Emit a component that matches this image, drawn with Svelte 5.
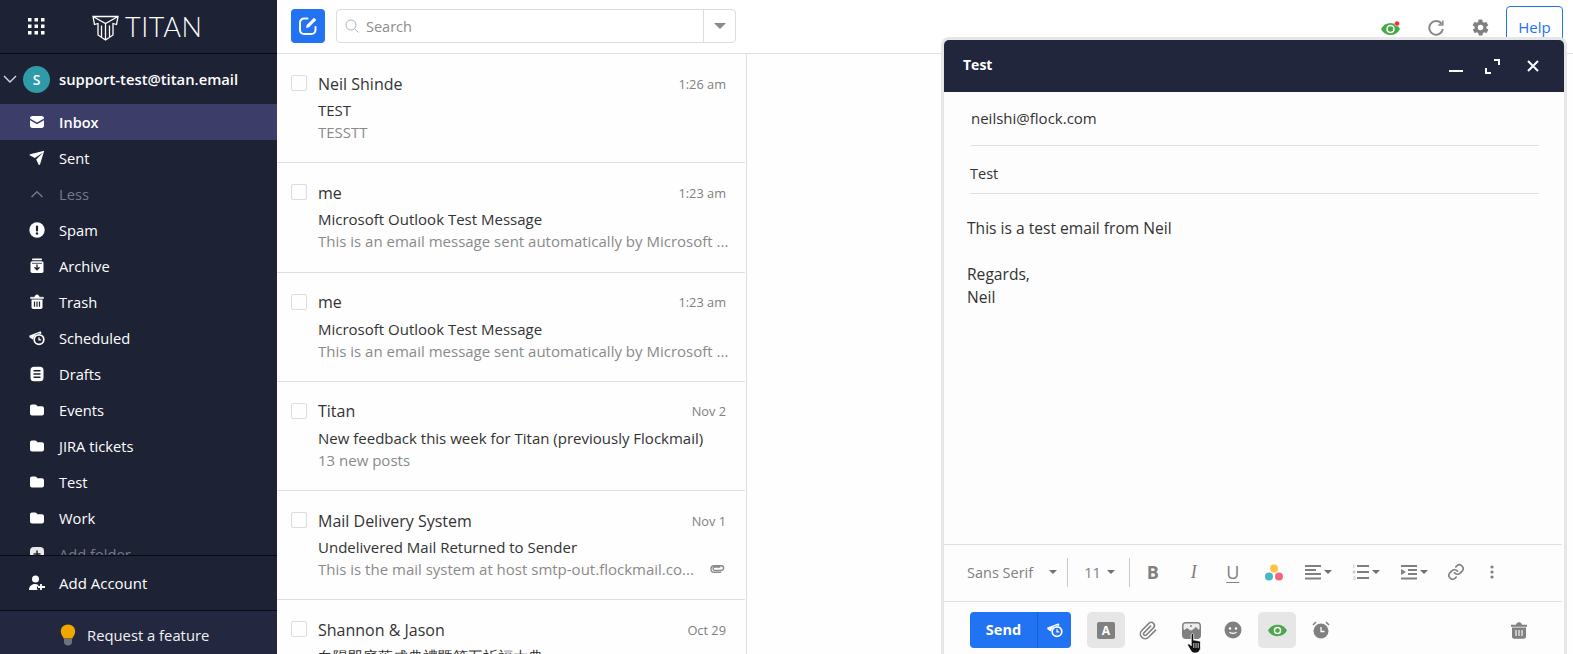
<script>
  const folder = '<path d="M1 4.5C1 3.4 1.9 2.5 3 2.5h3.2c.5 0 .9.2 1.2.5l1.1 1.2H13c1.1 0 2 .9 2 2v5.3c0 1.1-.9 2-2 2H3c-1.1 0-2-.9-2-2z" fill="currentColor"/>';
  const clockBadge = '<path d="M0.5 5.6 11 1.6c.8-.3 1.5.5 1.3 1.3l-.3 1A6 6 0 0 0 4.2 9 6 6 0 0 0 4.3 9.8L1 7.8C.2 7.2 0 6 .5 5.6z" fill="currentColor"/><circle cx="10" cy="9.6" r="4.8" fill="none" stroke="currentColor" stroke-width="1.7"/><path d="M10 7.2v2.6h2.2" fill="none" stroke="currentColor" stroke-width="1.3"/>';
  const icons = {
    inbox: '<path d="M1 4.2C1 3 2 2 3.2 2h9.6C14 2 15 3 15 4.2v.3L8 8.6 1 4.5z" fill="currentColor"/><path d="M1 6.2l7 4.1 7-4.1v5.6c0 1.2-1 2.2-2.2 2.2H3.2C2 14 1 13 1 11.8z" fill="currentColor"/>',
    sent: '<path d="M15.2.8 11 14.6c-.2.6-1 .7-1.3.1L7.2 9.4 14 2.4 5.9 7.9 1 5.6c-.6-.3-.5-1.1.1-1.3z" fill="currentColor"/>',
    less: '<path d="M2.5 11 8 5.8l5.500 5.200" fill="none" stroke="currentColor" stroke-width="1.500"/>',
    spam: '<circle cx="8" cy="8" r="7.700" fill="currentColor"/><rect x="6.900" y="3.500" width="2.200" height="6" rx="1" fill="#1e2235"/><circle cx="8" cy="11.500" r="1.200" fill="#1e2235"/>',
    archive: '<rect x="3" y="0.500" width="10" height="1.800" rx=".8" fill="currentColor"/><path d="M1.500 5c0-1 .8-1.700 1.700-1.700h9.600c.9 0 1.700.7 1.700 1.700v8.300c0 1-.8 1.700-1.700 1.700H3.200c-.9 0-1.700-.7-1.700-1.700z" fill="currentColor"/><path d="M8 6.500v5.200M5.500 9.300 8 11.800l2.500-2.500" stroke="#1e2235" stroke-width="1.400" fill="none"/><path d="M3 5.300h10" stroke="#1e2235" stroke-width=".8"/>',
    trash: '<path d="M1.500 3.200h13v1.300h-13zM5.800 3.200c0-1.400.9-2.400 2.200-2.400s2.200 1 2.200 2.400" fill="currentColor" stroke="currentColor" stroke-width=".5"/><path d="M2.500 5.500h11v7.800c0 1-.8 1.700-1.700 1.700H4.200c-.9 0-1.700-.7-1.700-1.700z" fill="currentColor"/><path d="M5.500 7.500v5.200M8 7.500v5.200M10.500 7.500v5.200" stroke="#1e2235" stroke-width="1.200"/>',
    scheduled: clockBadge,
    drafts: '<rect x="1.500" y="0.800" width="13" height="14.400" rx="3.500" fill="currentColor"/><path d="M4.500 4.800h7M4.500 8h7M4.500 11.200h7" stroke="#1e2235" stroke-width="1.400"/>',
    folder,
    addf: '<rect x="1" y="1" width="14" height="14" rx="4" fill="#e8e8e8"/><path d="M8 4.500v7M4.500 8h7" stroke="#1e2235" stroke-width="1.500"/>'
  };
  const nav = [
    ['Inbox', 'inbox', 'active'], ['Sent', 'sent', ''], ['Less', 'less', 'dim'], ['Spam', 'spam', ''],
    ['Archive', 'archive', ''], ['Trash', 'trash', ''], ['Scheduled', 'scheduled', ''], ['Drafts', 'drafts', ''],
    ['Events', 'folder', ''], ['JIRA tickets', 'folder', ''], ['Test', 'folder', ''], ['Work', 'folder', ''],
    ['Add folder', 'addf', 'dim']
  ];
  const mails = [
    { from: 'Neil Shinde', time: '1:26 am', subject: 'TEST', preview: 'TESSTT' },
    { from: 'me', time: '1:23 am', subject: 'Microsoft Outlook Test Message', preview: 'This is an email message sent automatically by Microsoft ...' },
    { from: 'me', time: '1:23 am', subject: 'Microsoft Outlook Test Message', preview: 'This is an email message sent automatically by Microsoft ...' },
    { from: 'Titan', time: 'Nov 2', subject: 'New feedback this week for Titan (previously Flockmail)', preview: '13 new posts' },
    { from: 'Mail Delivery System', time: 'Nov 1', subject: 'Undelivered Mail Returned to Sender', preview: 'This is the mail system at host smtp-out.flockmail.co...', clip: true },
    { from: 'Shannon & Jason', time: 'Oct 29', subject: '白陽即庭落成典禮暨第五祈福大典', preview: '' }
  ];
</script>

<div class="app">
  <aside class="side">
    <div class="brand">
      <svg class="grid" viewBox="0 0 17 17" width="17" height="17" fill="#fff">
        {#each [0, 6.500, 13] as y}{#each [0, 6.500, 13] as x}<rect {x} {y} width="3.500" height="3.500" />{/each}{/each}
      </svg>
      <svg class="logo" viewBox="0 0 27 26" width="27" height="26" fill="none" stroke="#fff" stroke-width="1.300">
        <path d="M1 1.500h25l-1.500 8-3.500-1v11.500L13.500 25 6 20V8.500l-3.500 1zM1 1.500l12.500 7 12.500-7M13.500 8.500V25M9.500 10.500V22.500M17.500 10.500V22.500" />
      </svg>
      <span class="wordmark">TITAN</span>
    </div>
    <div class="account">
      <svg viewBox="0 0 14 14" width="14" height="14" fill="none" stroke="#d8dae2" stroke-width="1.400"><path d="M1 4l6 6 6-6" /></svg>
      <span class="avatar">S</span>
      <span class="email">support-test@titan.email</span>
    </div>
    <nav class="nav">
      {#each nav as [label, icon, cls]}
        <div class="item {cls}">
          <svg viewBox="0 0 16 16" width="16" height="16">{@html icons[icon]}</svg>
          <span>{label}</span>
        </div>
      {/each}
    </nav>
    <div class="add">
      <svg viewBox="0 0 16 16" width="16" height="16" fill="currentColor">
        <circle cx="6.500" cy="4" r="3.500" /><path d="M0 15c0-3.500 2.500-6 6-6 1.300 0 2.500.3 3.400 1v1.400H8v3.200h1.200V15z" /><path d="M12 9v6M9 12h7" stroke="currentColor" stroke-width="1.800" />
      </svg>
      <span>Add Account</span>
    </div>
    <div class="request">
      <svg viewBox="0 0 16 22" width="16" height="22">
        <path d="M8 .5C3.800.5.800 3.600.800 7.500c0 3 2 4.700 3 7.100h8.400c1-2.400 3-4.100 3-7.100C15.200 3.600 12.200.5 8 .5z" fill="#f0a800" />
        <path d="M4 15h8v3c0 1.200-1 3.500-4 3.500S4 19.200 4 18z" fill="#6f7280" />
      </svg>
      <span>Request a feature</span>
    </div>
  </aside>

  <main class="main">
    <header class="top">
      <button class="compose" aria-label="Compose">
        <svg viewBox="0 0 20 20" width="20" height="20" fill="none" stroke="#fff" stroke-width="2">
          <path d="M9.500 2.500H6A4 4 0 0 0 2 6.500V14a4 4 0 0 0 4 4h7.500a4 4 0 0 0 4-4v-3" stroke-linecap="round" />
          <path d="M8 12l.7-3L16 1.800l2.300 2.300L11 11.300z" fill="#fff" stroke="none" />
        </svg>
      </button>
      <div class="search">
        <svg viewBox="0 0 14 14" width="14" height="14" fill="none" stroke="#b4b4b4" stroke-width="1"><circle cx="6" cy="6" r="5" /><path d="M9.500 9.500l4 4" /></svg>
        <span class="ph">Search</span>
        <span class="drop"><i class="caret big"></i></span>
      </div>
      <div class="tools">
        <svg class="t-eye" viewBox="0 0 20 16" width="20" height="16">
          <path d="M0 9c2-4 5.500-6 9.500-6S17 5 19 9c-2 4-5.500 6-9.500 6S2 13 0 9z" fill="#4aa84a" />
          <circle cx="9.500" cy="9" r="3.500" fill="none" stroke="#fff" stroke-width="1.500" />
          <circle cx="16" cy="3.500" r="2.500" fill="#f02d2d" stroke="#fff" stroke-width=".5" />
        </svg>
        <svg class="t-ref" viewBox="0 0 16 16" width="16" height="16" fill="none" stroke="#888" stroke-width="2">
          <path d="M13.500 3.800A6.800 6.800 0 1 0 14.800 9" /><path d="M14.800 .5v4.500h-4.500" stroke-width="1.500" />
        </svg>
        <svg class="t-gear" viewBox="0 0 24 24" width="19" height="19" fill="#808080">
          <path fill-rule="evenodd" d="M19.400 13a7.600 7.600 0 0 0 0-2l2.100-1.600a.5.500 0 0 0 .1-.6l-2-3.500a.5.500 0 0 0-.6-.2l-2.500 1a7.300 7.300 0 0 0-1.700-1l-.4-2.700a.5.500 0 0 0-.5-.4h-4a.5.500 0 0 0-.5.400l-.4 2.700a7.300 7.300 0 0 0-1.700 1l-2.500-1a.5.500 0 0 0-.6.200l-2 3.500a.5.500 0 0 0 .1.600L4.600 11a7.600 7.600 0 0 0 0 2l-2.100 1.600a.5.500 0 0 0-.1.600l2 3.500c.1.200.4.300.6.200l2.500-1c.5.400 1.100.7 1.700 1l.4 2.700c0 .2.200.4.500.4h4c.2 0 .4-.2.500-.4l.4-2.700c.6-.3 1.200-.6 1.700-1l2.500 1c.2.100.5 0 .6-.2l2-3.500a.5.500 0 0 0-.1-.6zM12 15.500a3.500 3.500 0 1 1 0-7 3.500 3.500 0 0 1 0 7z" />
        </svg>
        <button class="help">Help</button>
      </div>
    </header>
    <div class="panes">
      <section class="list">
        {#each mails as m}
          <article class="mail">
            <span class="check"></span>
            <div class="mbody">
              <div class="l1"><span class="from">{m.from}</span><span class="time">{m.time}</span></div>
              <div class="subject">{m.subject}</div>
              <div class="l3">
                <span class="preview">{m.preview}</span>
                {#if m.clip}
                  <svg class="mclip" viewBox="0 0 16 10" width="15" height="10" fill="none" stroke="#8a8a8a" stroke-width="1.500"><path d="M11 3H5a1.300 1.300 0 0 0 0 3.500h7a2 2 0 0 0 0-5H4.500a3.500 3.500 0 0 0 0 7H12" /></svg>
                {/if}
              </div>
            </div>
          </article>
        {/each}
      </section>
      <div class="empty"></div>
    </div>
  </main>

  <section class="win">
    <header class="win-head">
      <strong>Test</strong>
      <div class="win-ctl">
        <svg viewBox="0 0 14 14" width="14" height="14" stroke="#fff" stroke-width="2" fill="none"><path d="M0 12h14" /></svg>
        <svg viewBox="0 0 15 15" width="15" height="15" stroke="#fff" stroke-width="2" fill="none"><path d="M9 1h5v5M1 9v5h5" /></svg>
        <svg viewBox="0 0 12 12" width="12" height="12" stroke="#fff" stroke-width="2" fill="none"><path d="M1 1l10 10M11 1 1 11" /></svg>
      </div>
    </header>
    <div class="field to">neilshi@flock.com</div>
    <div class="field subj">Test</div>
    <div class="text">
      <div>This is a test email from Neil</div>
      <div>&nbsp;</div>
      <div>Regards,</div>
      <div>Neil</div>
    </div>
    <div class="toolbar">
      <span class="tb fontname">Sans Serif</span><i class="caret c1"></i><span class="vsep s1"></span>
      <span class="tb size">11</span><i class="caret c2"></i><span class="vsep s2"></span>
      <span class="fmt b">B</span>
      <span class="fmt i">I</span>
      <span class="fmt u">U</span>
      <svg class="colors" viewBox="0 0 18 17" width="18" height="17">
        <circle cx="9" cy="4.500" r="4" fill="#fcc53e" /><circle cx="4" cy="12.500" r="4" fill="#46b6c9" /><circle cx="14" cy="12.500" r="4" fill="#f4667a" />
      </svg>
      <svg class="g-align" viewBox="0 0 16 16" width="16" height="16" stroke="#808080" stroke-width="2"><path d="M0 2h16M0 6h11M0 10h16M0 14.500h16" /></svg><i class="caret c3"></i>
      <svg class="g-list" viewBox="0 0 17 16" width="17" height="16">
        <path d="M5 2h12M5 8h12M5 14h12" stroke="#808080" stroke-width="2" /><path d="M1 1h1v3M1 7h2v1H1v1h2M1 13h2v3H1" stroke="#aaa" stroke-width=".6" fill="none" />
      </svg><i class="caret c4"></i>
      <svg class="g-indent" viewBox="0 0 16 16" width="16" height="16">
        <path d="M0 2h16M7 6h9M7 10h9M0 14.500h16" stroke="#808080" stroke-width="2" /><path d="M0 5l5 3-5 3z" fill="#808080" />
      </svg><i class="caret c5"></i>
      <svg class="g-link" viewBox="0 0 24 24" width="18" height="18" fill="none" stroke="#808080" stroke-width="2.200" stroke-linecap="round">
        <path d="M10 13a5 5 0 0 0 7.500.5l3-3a5 5 0 0 0-7-7l-1.700 1.700" /><path d="M14 11a5 5 0 0 0-7.500-.5l-3 3a5 5 0 0 0 7 7l1.700-1.700" />
      </svg>
      <svg class="g-more" viewBox="0 0 4 14" width="4" height="14" fill="#808080"><circle cx="2" cy="2" r="1.600" /><circle cx="2" cy="7" r="1.600" /><circle cx="2" cy="12" r="1.600" /></svg>
    </div>
    <footer class="actions">
      <div class="send">
        <span class="send-l">Send</span>
        <span class="send-r">
          <svg viewBox="0 0 16 16" width="16" height="16" color="#fff">{@html clockBadge}</svg>
        </span>
      </div>
      <span class="sq a-sq"><span class="a-box">A</span></span>
      <svg class="a-clip" viewBox="0 0 24 24" width="19" height="19" fill="none" stroke="#808080" stroke-width="2" stroke-linecap="round">
        <path d="M21 11.500l-9 9a6 6 0 0 1-8.500-8.500l9-9a4 4 0 0 1 5.700 5.700l-9 9a2 2 0 0 1-2.900-2.900l8.300-8.300" />
      </svg>
      <svg class="a-img" viewBox="0 0 19 17" width="19" height="17">
        <rect x="0" y="0" width="19" height="17" rx="4" fill="#808080" />
        <rect x="1.500" y="1.500" width="16" height="7" rx="2" fill="#ececec" />
        <path d="M1 9l4-3 4 3 5-4 4 4v3H1z" fill="#808080" />
        <circle cx="9" cy="4" r="1" fill="#808080" />
      </svg>
      <svg class="a-smile" viewBox="0 0 18 18" width="18" height="18">
        <circle cx="9" cy="9" r="8.500" fill="#808080" /><circle cx="6" cy="7.500" r="1.200" fill="#fff" /><circle cx="12" cy="7.500" r="1.200" fill="#fff" />
        <path d="M5.500 11c1 1.800 6 1.800 7 0" stroke="#fff" stroke-width="1.200" fill="none" />
      </svg>
      <span class="sq e-sq">
        <svg viewBox="0 0 20 13" width="19" height="13">
          <path d="M0 6.500C2 2.500 5.800.5 10 .5s8 2 10 6c-2 4-5.800 6-10 6s-8-2-10-6z" fill="#4aa84a" />
          <circle cx="10" cy="6.500" r="3.200" fill="none" stroke="#fff" stroke-width="1.500" />
        </svg>
      </span>
      <svg class="a-alarm" viewBox="0 0 18 18" width="18" height="18">
        <circle cx="9" cy="10" r="7.500" fill="#808080" />
        <path d="M9 6v4.500h3.500" stroke="#fff" stroke-width="1.300" fill="none" />
        <path d="M1 4l3-3M17 4l-3-3" stroke="#808080" stroke-width="1.500" />
      </svg>
      <svg class="a-trash" viewBox="0 0 16 17" width="16" height="17">
        <path d="M0 3h16v1.500H0zM5.300 3c0-1.500 1.200-2.500 2.700-2.500S10.700 1.500 10.700 3" fill="#808080" stroke="#808080" stroke-width=".5" />
        <path d="M1 5.500h14v9c0 1.300-1 2.300-2.300 2.300H3.300C2 16.800 1 15.800 1 14.500z" fill="#808080" />
        <path d="M5 8v6M8 8v6M11 8v6" stroke="#f5f5f5" stroke-width="1.200" />
      </svg>
      <svg class="hand" viewBox="0 0 16 21" width="16" height="21">
        <path d="M4.200 1.800c0-1.700 2.500-1.700 2.500 0v5.500c.9-.5 1.800-.3 2.100.3.800-.4 1.700-.2 2 .4.800-.3 2.700 0 2.700 1.500v5.200c0 2.600-1.800 5.300-4.700 5.300H7.600c-2 0-3-1-4-2.700L.9 12.800c-.9-1.600 1.100-2.800 2.100-1.500l1.200 1.500z" fill="#111" stroke="#fff" stroke-width=".8" />
        <path d="M6.800 10v5M9 10v5M11.200 10v5" stroke="#fff" stroke-width=".8" />
      </svg>
    </footer>
  </section>
</div>

<style>
  :global(body) { margin: 0; background: #fff; }
  .app {
    display: flex; position: relative; width: 1573px; height: 654px; overflow: hidden;
    font-family: "Open Sans", sans-serif; font-size: 14px; color: #333;
  }
  .side { width: 277px; flex: none; background: #1e2235; color: #fff; display: flex; flex-direction: column; height: 654px; }
  .brand { height: 53px; flex: none; border-bottom: 1px solid #0a0a10; display: flex; align-items: center; box-sizing: content-box; }
  .grid { margin-left: 28px; }
  .logo { margin-left: 47px; margin-top: 2px; }
  .wordmark { margin-left: 6px; font-family: Lato, sans-serif; font-weight: 300; font-size: 27px; letter-spacing: .6px; color: #fff; line-height: 1; }
  .account { height: 50px; flex: none; display: flex; align-items: center; padding-left: 3px; }
  .avatar { width: 27px; height: 27px; border-radius: 50%; background: #2f9aa8; margin-left: 6px; display: flex; align-items: center; justify-content: center; font-weight: 600; font-size: 14px; color: #fff; }
  .email { margin-left: 9px; font-weight: 600; font-size: 14.800px; color: #fff; white-space: nowrap; }
  .nav { height: 451px; flex: none; overflow: hidden; }
  .item { height: 36px; display: flex; align-items: center; padding-left: 29px; gap: 14px; color: #fff; font-size: 14.700px; }
  .item.active { background: #3c3d69; font-weight: 600; font-size: 14.500px; }
  .item.dim { color: #77798a; }
  .add { flex: none; height: 54px; box-sizing: content-box; border-top: 1px solid #0a0a10; border-bottom: 1px solid #0a0a10; display: flex; align-items: center; padding-left: 29px; gap: 14px; font-size: 15px; color: #fff; }
  .request { flex: 1; background: #232840; display: flex; align-items: center; padding: 5px 0 0 60px; gap: 11px; color: #f2f2f2; font-size: 14.800px; }

  .main { flex: 1; min-width: 0; display: flex; flex-direction: column; background: #fefefe; }
  .top { box-sizing: border-box; height: 54px; flex: none; border-bottom: 1px solid #e0e0e0; display: flex; align-items: flex-start; padding: 9px 0 0 14px; background: #fff; position: relative; }
  .compose { width: 34px; height: 34px; border: 0; padding: 0; background: #2272f4; border-radius: 4px; display: flex; align-items: center; justify-content: center; }
  .search { width: 390px; height: 32px; margin-left: 11px; border: 1px solid #dcdcdc; border-radius: 4px; display: flex; align-items: center; padding-left: 8px; }
  .ph { margin-left: 7px; color: #8c8c8c; font-size: 14.500px; flex: 1; }
  .drop { width: 31px; height: 32px; border-left: 1px solid #dcdcdc; display: flex; align-items: center; justify-content: center; }
  .tools { margin-left: auto; margin-top: -9px; display: flex; align-items: center; padding-right: 10px; height: 53px; }
  .t-eye { margin-top: 2px; }
  .t-ref { margin-left: 27px; margin-top: 2px; }
  .t-gear { margin-left: 27px; margin-top: 2px; }
  .help { margin-left: 16px; width: 57px; height: 48px; margin-top: 6px; align-self: flex-start; border: 1px solid #2272f4; border-radius: 4px; background: #fff; color: #2272f4; font: 15px "Open Sans", sans-serif; padding: 0 0 7px; }
  .panes { flex: 1; display: flex; min-height: 0; }
  .list { width: 469px; flex: none; border-right: 1px solid #e0e0e0; overflow: hidden; background: #fefefe; }
  .empty { flex: 1; }
  .mail { height: 109.250px; box-sizing: border-box; border-bottom: 1px solid #dfdfdf; margin-right: 1px; display: flex; padding: 21px 0 0 14px; }
  .check { width: 14px; height: 14px; border: 1px solid #dcdcdc; border-radius: 2px; flex: none; margin-top: 0; }
  .mbody { margin-left: 11px; width: 408px; min-width: 0; }
  .l1 { display: flex; justify-content: space-between; align-items: center; height: 17px; }
  .from { font-size: 16px; color: #333; line-height: 16px; }
  .time { font-size: 12.800px; color: #808080; line-height: 16px; }
  .subject { margin-top: 8px; height: 21px; line-height: 20px; font-size: 15px; color: #333; white-space: nowrap; overflow: hidden; }
  .l3 { height: 22px; line-height: 22px; display: flex; align-items: center; gap: 10px; margin-right: -4px; }
  .preview { flex: 1; min-width: 0; font-size: 15px; color: #8a8a8a; white-space: nowrap; overflow: hidden; }
  .mclip { margin-right: 5px; }

  .win { position: absolute; left: 941px; top: 37px; width: 626px; height: 618px; box-sizing: border-box; border: 3px solid #e6e6e6; border-bottom: 0; border-radius: 8px 8px 0 0; background: #fdfdfd; display: flex; flex-direction: column; }
  .win-head { height: 52px; flex: none; background: #22263c; border-radius: 5px 5px 0 0; color: #fff; display: flex; align-items: center; padding: 0 25px 4px 19px; box-sizing: border-box; }
  .win-head strong { font-size: 14px; font-weight: 700; }
  .win-ctl { margin-left: auto; display: flex; align-items: center; gap: 22px; margin-top: 4px; }
  .win-ctl svg:last-child { margin-left: 5px; }
  .field { margin: 0 25px 0 27px; box-sizing: border-box; border-bottom: 1px solid #dfdfdf; font-size: 15px; color: #333; }
  .to { height: 54px; line-height: 52px; }
  .subj { height: 48px; line-height: 55px; margin-left: 26px; padding-left: 0; font-size: 14.500px; }
  .text { margin: 23px 0 0 23px; font-size: 15.600px; line-height: 23px; color: #333; flex: 1; }
  .toolbar { height: 58px; flex: none; box-sizing: border-box; padding-bottom: 2px; border-top: 1px solid #dfdfdf; border-bottom: 1px solid #dfdfdf; margin-right: 2px; position: relative; display: flex; align-items: center; color: #808080; }
  .tb { font-size: 14.500px; color: #808080; white-space: nowrap; }
  .fontname { margin-left: 23px; }
  .c1 { margin-left: 16px; }
  .s1 { margin-left: 10px; }
  .vsep { width: 1px; height: 29px; background: #c8c8c8; }
  .size { margin-left: 16px; }
  .c2 { margin-left: 6px; }
  .s2 { margin-left: 14px; }
  .fmt { font-size: 18px; width: 14px; text-align: center; line-height: 1; color: #808080; }
  .b { font-weight: 700; margin-left: 16px; }
  .i { font-style: italic; font-family: "Liberation Serif", serif; margin-left: 27px; }
  .u { text-decoration: underline; margin-left: 25px; text-underline-offset: 3px; text-decoration-thickness: 1px; }
  .colors { margin-left: 25px; }
  .g-align { margin-left: 22px; }
  .c3 { margin-left: 3px; }
  .g-list { margin-left: 20px; }
  .c4 { margin-left: 3px; }
  .g-indent { margin-left: 21px; }
  .c5 { margin-left: 3px; }
  .g-link { margin-left: 19px; }
  .g-more { margin-left: 25px; }
  .caret { display: block; width: 0; height: 0; border-left: 4px solid transparent; border-right: 4px solid transparent; border-top: 4px solid #707070; flex: none; }
  .caret.big { border-left-width: 6px; border-right-width: 6px; border-top-width: 6px; border-top-color: #8a8a8a; }
  .actions { height: 53px; flex: none; box-sizing: border-box; padding-top: 3px; position: relative; display: flex; align-items: center; padding-left: 26px; }
  .send { width: 101px; height: 36px; background: #2272f4; border-radius: 4px; display: flex; color: #fff; }
  .send-l { flex: 1; text-align: center; line-height: 36px; font-weight: 700; font-size: 14.500px; }
  .send-r { width: 33px; border-left: 1px solid #1a5fd0; display: flex; align-items: center; justify-content: center; }
  .sq { width: 38px; height: 36px; background: #e6e6e6; border-radius: 5px; display: flex; align-items: center; justify-content: center; }
  .a-sq { margin-left: 16px; }
  .a-box { width: 18px; height: 17px; background: #808080; border-radius: 2px; color: #fff; font-size: 12px; font-weight: 700; text-align: center; line-height: 17px; }
  .a-clip { margin-left: 14px; }
  .a-img { margin-left: 24px; }
  .a-smile { margin-left: 23px; }
  .e-sq { margin-left: 16px; }
  .a-alarm { margin-left: 16px; }
  .a-trash { margin-left: 181px; }
  .hand { position: absolute; left: 243px; top: 31px; }
</style>
